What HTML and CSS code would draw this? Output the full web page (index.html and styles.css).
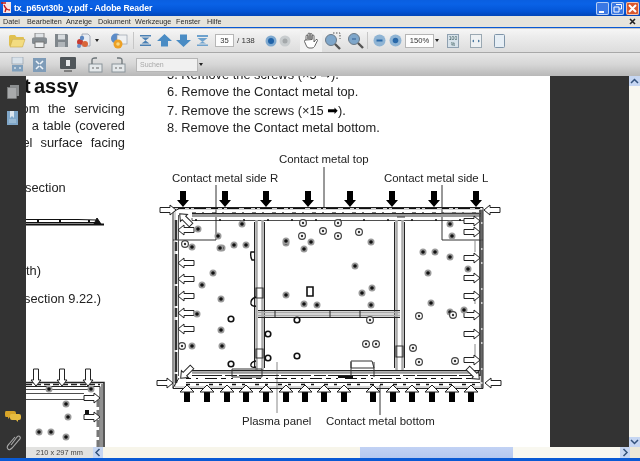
FILE: index.html
```html
<!DOCTYPE html>
<html lang="de">
<head>
<meta charset="utf-8">
<title>tx_p65vt30b_y.pdf - Adobe Reader</title>
<link rel="stylesheet" href="styles.css">
</head>
<body>
<div class="window">
  <header class="titlebar">
    <svg class="app-icon" width="11" height="12" viewBox="0 0 11 12"><rect x="2" y="0" width="8" height="11" fill="#f6e6e6"/><path d="M3 3C5 8 7 8 9 8M5 7L4 10M0 1H5" stroke="#c01818" stroke-width="1.4" fill="none"/></svg>
    <span class="title-text">tx_p65vt30b_y.pdf - Adobe Reader</span>
    <div class="win-buttons">
      <span class="win-btn"><svg width="13" height="13" viewBox="0 0 13 13"><rect x="3" y="9" width="5" height="2" fill="#fff"/></svg></span>
      <span class="win-btn"><svg width="13" height="13" viewBox="0 0 13 13"><path d="M5 2.500H10.500V7H8M3 5H8V10H3Z" fill="none" stroke="#fff"/></svg></span>
      <span class="win-btn win-close"><svg width="13" height="13" viewBox="0 0 13 13"><path d="M3 3L10 10M10 3L3 10" stroke="#fff" stroke-width="2"/></svg></span>
    </div>
  </header>
  <nav class="menubar">
    <span class="m-datei">Datei</span><span class="m-bearb">Bearbeiten</span><span class="m-anz">Anzeige</span><span class="m-dok">Dokument</span><span class="m-werk">Werkzeuge</span><span class="m-fen">Fenster</span><span class="m-hilfe">Hilfe</span>
    <svg class="doc-close" width="7" height="7" viewBox="0 0 7 7"><path d="M1 1L6 6M6 1L1 6" stroke="#222" stroke-width="1.600"/></svg>
  </nav>
  <div class="toolbar tb-one">
    <span class="btn w22"><svg width="18" height="14" viewBox="0 0 18 14"><path d="M1 2.500Q1 1 2.500 1H7L8.500 3H15Q16 3 16 4V5H5L2.500 12H2Q1 12 1 11Z" fill="#e0c050"/><path d="M4.500 5.500H17L14.500 13H2Z" fill="#f3dc80" stroke="#c9a63c" stroke-width=".6"/></svg></span>
    <span class="btn w22"><svg width="17" height="15" viewBox="0 0 17 15"><rect x="4" y="0" width="9" height="5" fill="#dfe3e6" stroke="#888"/><rect x="1" y="4.500" width="15" height="6.500" rx="1.500" fill="#858c91"/><rect x="4" y="9" width="9" height="5.500" fill="#eef0f1" stroke="#777"/></svg></span>
    <span class="btn w22"><svg width="15" height="15" viewBox="0 0 15 15"><path d="M1 1H13L14 2V14H1Z" fill="#7f868b"/><rect x="4" y="1.500" width="7" height="5" fill="#d8dcdf"/><rect x="4" y="9" width="7" height="5" fill="#b0b5b9"/></svg></span>
    <span class="btn w22"><svg width="17" height="16" viewBox="0 0 17 16"><path d="M7 1H13L15 3V13H7Z" fill="#e8ecf2" stroke="#8a94a4" stroke-width=".7"/><circle cx="5" cy="9" r="3" fill="#c83a30"/><circle cx="10" cy="11" r="3" fill="#d9663a"/><circle cx="7" cy="5" r="2.200" fill="#5c86c0"/><circle cx="4" cy="13" r="2" fill="#6a90c8"/></svg></span>
    <span class="caret"></span>
    <span class="sp8"></span>
    <span class="btn w22"><svg width="18" height="16" viewBox="0 0 18 16"><circle cx="6" cy="5.500" r="5" fill="#5c8cc8"/><rect x="7" y="2" width="10" height="9" fill="#eef0f2" stroke="#8a94a0" stroke-width=".6"/><circle cx="8" cy="11" r="4.500" fill="#eda024"/><circle cx="8" cy="11" r="1.800" fill="#f8d880"/></svg></span>
    <span class="sep s-a"></span>
    <span class="btn w19"><svg width="13" height="13" viewBox="0 0 13 13"><path d="M1 1H12V2.500H1ZM1 10.500H12V12H1ZM2.500 3.500H10.500L6.500 6.500ZM2.500 9.500H10.500L6.500 6.500Z" fill="#4a80b4"/></svg></span>
    <span class="btn w19"><svg width="15" height="13" viewBox="0 0 15 13"><path d="M7.500 0L15 7H11V12.500H4V7H0Z" fill="#4a8cc4"/></svg></span>
    <span class="btn w19"><svg width="15" height="13" viewBox="0 0 15 13"><path d="M7.500 13L15 6H11V.5H4V6H0Z" fill="#4a8cc4"/></svg></span>
    <span class="btn w19"><svg width="13" height="13" viewBox="0 0 13 13"><path d="M1 1H12V3H1ZM1.500 4L11.500 4L6.500 8ZM1 10.500H12V12H1ZM3 9.500H10L6.500 7.500Z" fill="#6ea2ce"/></svg></span>
    <span class="field page-field">35</span>
    <span class="page-count">/ 138</span>
    <span class="btn w14 gap9"><svg width="12" height="12" viewBox="0 0 12 12"><circle cx="6" cy="6" r="5.500" fill="#7fa9cf"/><circle cx="6" cy="6" r="3" fill="#1f62a8"/></svg></span>
    <span class="btn w14"><svg width="12" height="12" viewBox="0 0 12 12"><circle cx="6" cy="6" r="5.500" fill="#c8ccce"/><circle cx="6" cy="6" r="2.500" fill="#a4a8aa"/></svg></span>
    <span class="btn w22 hand gap8"><svg width="16" height="17" viewBox="0 0 16 17"><path d="M3 8V4.500Q3 3 4 3T5 4.500V7M5 7V2.500Q5 1 6 1T7 2.500V7M7 7V2.500Q7 1.500 8 1.500T9 2.500V7.500M9 7.500V4Q9 3 10 3T11 4V10L13 7.500Q14.500 7 14.500 8.500L11.500 14.500Q10.500 16 9 16H6Q4 16 3 13L1.500 9.500Q1.500 7.500 3 8Z" fill="#fff" stroke="#555" stroke-width=".9"/></svg></span>
    <span class="btn w22"><svg width="19" height="18" viewBox="0 0 19 18"><path d="M9 1H16V7" fill="none" stroke="#555" stroke-dasharray="1.500 1.500"/><circle cx="7" cy="8" r="5.500" fill="#7ea6ca" stroke="#6b7a88"/><path d="M11 12L16 17" stroke="#555" stroke-width="2.400"/></svg></span>
    <span class="btn w22 gap1"><svg width="19" height="18" viewBox="0 0 19 18"><circle cx="7" cy="7" r="5.500" fill="#7ea6ca" stroke="#6b7a88"/><path d="M11 11L16 16" stroke="#555" stroke-width="2.400"/><path d="M5 7H9" stroke="#2c5c94"/></svg></span>
    <span class="sep s-b"></span>
    <span class="btn w16"><svg width="13" height="13" viewBox="0 0 13 13"><circle cx="6.500" cy="6.500" r="6" fill="#8fb4d4"/><path d="M3.500 6.500H9.500" stroke="#2868a8" stroke-width="2"/></svg></span>
    <span class="btn w16"><svg width="13" height="13" viewBox="0 0 13 13"><circle cx="6.500" cy="6.500" r="6" fill="#8fb4d4"/><circle cx="6.500" cy="6.500" r="2.800" fill="#2868a8"/></svg></span>
    <span class="field zoom-field">150%</span>
    <span class="caret"></span>
    <span class="btn w22 gap2"><svg width="12" height="14" viewBox="0 0 12 14"><rect x=".5" y=".5" width="11" height="13" fill="#d7e2ea" stroke="#8ea0b0"/><text class="tiny" x="6" y="6">100</text><text class="tiny" x="6" y="12">%</text></svg></span>
    <span class="btn w22 gap1"><svg width="12" height="14" viewBox="0 0 12 14"><rect x=".5" y=".5" width="11" height="13" fill="#eef1f3" stroke="#9aa8b2"/><path d="M2 7L4 5.500V8.500ZM10 7L8 5.500V8.500Z" fill="#4a78a0"/></svg></span>
    <span class="btn w22 gap1"><svg width="11" height="14" viewBox="0 0 11 14"><rect x=".5" y=".5" width="10" height="13" rx="1" fill="#e6eef5" stroke="#7e94a8"/></svg></span>
  </div>
  <div class="toolbar tb-two">
    <span class="btn w22"><svg width="13" height="15" viewBox="0 0 13 15"><rect x="1" y="0" width="11" height="7" fill="#d9e2ea" stroke="#8a98a6" stroke-width=".6"/><rect x="1" y="8" width="11" height="6.500" fill="#7f9fbc"/><path d="M3 11H5M8 11H10" stroke="#fff"/></svg></span>
    <span class="btn w22"><svg width="13" height="14" viewBox="0 0 13 14"><rect x="0" y="0" width="13" height="14" fill="#7f9cb8"/><path d="M3 3L6 6M10 3L7 6M3 11L6 8M10 11L7 8" stroke="#eef3f8" stroke-width="1.600"/></svg></span>
    <span class="btn w22 gap7"><svg width="16" height="15" viewBox="0 0 16 15"><rect x="0" y="0" width="16" height="12" rx="1" fill="#50565a"/><rect x="6" y="3" width="4" height="6" fill="#e8eaec"/><path d="M4 14H12" stroke="#666" stroke-width="1.500"/></svg></span>
    <span class="btn w22 gap6"><svg width="16" height="16" viewBox="0 0 16 16"><rect x="1" y="7" width="13" height="8" fill="#e4e8ea" stroke="#8a949a"/><path d="M4 7V3Q4 1 7 1H9" fill="none" stroke="#6c7478" stroke-width="1.300"/><path d="M4 11H6M8 11H11" stroke="#666"/></svg></span>
    <span class="btn w22"><svg width="16" height="16" viewBox="0 0 16 16"><rect x="2" y="7" width="13" height="8" fill="#e4e8ea" stroke="#8a949a"/><path d="M12 7V3Q12 1 9 1H7" fill="none" stroke="#6c7478" stroke-width="1.300"/><path d="M5 11H7M9 11H12" stroke="#666"/></svg></span>
    <span class="field search-field">Suchen</span>
    <span class="caret"></span>
  </div>
  <div class="workspace">
    <aside class="sidebar">
      <div class="side-top">
        <svg width="12" height="14" viewBox="0 0 12 14"><rect x="3" y="0" width="9" height="11" fill="#8c8f90"/><rect x=".5" y="2.500" width="9" height="11" fill="#a8aaab" stroke="#808283" stroke-width=".6"/></svg>
        <svg width="12" height="15" viewBox="0 0 12 15"><rect x="0" y="0" width="11" height="14" fill="#7fa6c8"/><path d="M3 0H7V7L5 5L3 7Z" fill="#dbe5ee"/><path d="M2 9H9M2 11H9" stroke="#b5cde0"/></svg>
      </div>
      <div class="side-bottom">
        <svg width="16" height="12" viewBox="0 0 16 12"><path d="M1 1H9Q11 1 11 3V5Q11 7 9 7H5L3 9V7H1Q0 7 0 5V3Q0 1 1 1Z" fill="#d8a428"/><path d="M6 4H14Q16 4 16 6V8Q16 10 14 10H13V12L11 10H7Q5 10 5 8V6Q5 4 6 4Z" fill="#e8bc40"/></svg>
        <svg width="15" height="17" viewBox="0 0 15 17"><path d="M5 11L11 3Q13 1 14 3Q15 4 13 6L6 14Q3 17 2 15Q0 13 3 10L9 3" fill="none" stroke="#a9a9a9" stroke-width="1.100"/></svg>
      </div>
    </aside>
    <div class="document-column">
      <div class="document-row">
        <svg class="page" viewBox="26 76 524 371" width="524" height="371">
          <defs>
            <path id="ar" d="M0 -2.500H10V-5L16 0L10 5V2.500H0Z" fill="#fff" stroke="#222" stroke-width="1"/>
            <path id="al" d="M16 -2.500H6V-5L0 0L6 5V2.500H16Z" fill="#fff" stroke="#222" stroke-width="1"/>
            <path id="ad" d="M-3 0H3V9H6L0 16L-6 9H-3Z" fill="#000"/>
            <g id="au"><path d="M-3 7H3V17H-3Z" fill="#000"/><path d="M0 0L7 7H-7Z" fill="#fff" stroke="#222"/></g>
            <path id="aw" d="M-2.500 -17V-6H-5L0 0L5 -6H2.500V-17Z" fill="#fff" stroke="#222"/>
            <g id="sa"><circle r="3.500" fill="#9a9a9a"/><circle r="1.800" fill="#111"/></g>
            <g id="sb"><circle r="3.400" fill="#fff" stroke="#444" stroke-width="1.200"/><circle r="1.200" fill="#333"/></g>
            <g id="sc"><circle r="2.800" fill="none" stroke="#111" stroke-width="1.600"/></g>
          </defs>

          <text class="pdf-h" x="34" y="93">assy</text>
          <text class="pdf-h" x="24" y="93">t</text>
          <text class="pdf-j" x="125" y="113" text-anchor="end" word-spacing="5">om the servicing</text>
          <text class="pdf-j" x="125" y="130" text-anchor="end" word-spacing=".6">a table (covered</text>
          <text class="pdf-j" x="125" y="147" text-anchor="end" word-spacing="4.500">el surface facing</text>
          <text class="pdf-j" x="25" y="192">section</text>
          <text class="pdf-j" x="41" y="275" text-anchor="end">depth)</text>
          <text class="pdf-j" x="24" y="303">section 9.22.)</text>

          <g stroke="#111" fill="none">
            <path d="M26 219.500H78L96 220" stroke-width="1"/>
            <path d="M26 222.500H100" stroke-width="1"/>
            <path d="M26 224.500H104" stroke-width="2"/>
            <path d="M38 220L38 222M60 220L60 222M89 220V222" stroke-width="2"/>
            <path d="M94 224L97 218L101 224Z" fill="#111"/>
          </g>

          <text class="pdf-t" x="167" y="79">5. Remove the screws (×5 <tspan class="arrow-glyph">➡</tspan>).</text>
          <text class="pdf-t" x="167" y="96">6. Remove the Contact metal top.</text>
          <text class="pdf-t" x="167" y="115">7. Remove the screws (×15 <tspan class="arrow-glyph">➡</tspan>).</text>
          <text class="pdf-t" x="167" y="132">8. Remove the Contact metal bottom.</text>

          <text class="pdf-l" x="279" y="163">Contact metal top</text>
          <text class="pdf-l" x="172" y="182">Contact metal side R</text>
          <text class="pdf-l" x="384" y="182">Contact metal side L</text>
          <text class="pdf-l" x="242" y="425">Plasma panel</text>
          <text class="pdf-l" x="326" y="425">Contact metal bottom</text>

          <!-- small diagram at lower left of the page -->
          <g fill="none" stroke="#222">
            <path d="M26 382.500H104V447" stroke-width="1.500"/>
            <path d="M26 386.500H100V447M102 384V447" stroke-width="1"/>
            <path d="M26 389.500H92M26 393.500H84M26 399.500H84" stroke-width=".8"/>
            <path d="M26 384.500H100" stroke-width="1.500" stroke-dasharray="6 3"/>
            <path d="M98 400V447" stroke="#777" stroke-width="3" stroke-dasharray="7 3"/>
          </g>
          <use href="#aw" x="36" y="386"/><use href="#aw" x="62" y="386"/><use href="#aw" x="88" y="386"/>
          <use href="#ar" x="84" y="398"/><use href="#ar" x="84" y="417"/>
          <use href="#sa" x="91" y="389"/><use href="#sa" x="49" y="389"/>
          <use href="#sa" x="66" y="404"/><use href="#sa" x="68" y="417"/><use href="#sa" x="39" y="432"/><use href="#sa" x="51" y="432"/><use href="#sa" x="66" y="437"/>
          <rect x="85" y="410" width="4" height="4" fill="#111"/>

          <!-- main diagram: leaders -->
          <g fill="none" stroke="#333">
            <path d="M324 167V207"/>
            <path d="M216 185V240H173"/>
            <path d="M442 185V240H483"/>
            <path d="M380 385V415"/>
          </g>
          <path d="M277 362V413" stroke="#888" fill="none"/>

          <!-- frame -->
          <g fill="none">
            <path d="M173 207.500H483V388.500H173Z" stroke="#222" stroke-width="1"/>
            <path d="M175 209H481V387H175Z" stroke="#aaa" stroke-width="1"/>
            <path d="M178 208.500H480" stroke="#111" stroke-width="1" stroke-dasharray="7 4 2 3 12 5"/>
            <path d="M192 213.500H481" stroke="#222" stroke-width="1"/>
            <path d="M192 212.500H481" stroke="#222" stroke-width=".6" stroke-dasharray="4 6 2 8"/>
            <path d="M192 215.500H481" stroke="#999" stroke-width="3"/>
            <path d="M192 218V220.500H480" stroke="#222" stroke-width=".8"/>
            <path d="M195 220H480" stroke="#111" stroke-width="1.500" stroke-dasharray="2 22"/>
            <path d="M176 220V386" stroke="#333" stroke-width="2.500" stroke-dasharray="20 2 9 3 30 2"/>
            <path d="M178.500 215V376" stroke="#555" stroke-width="1"/>
            <path d="M480 210V376" stroke="#222" stroke-width="1.500"/>
            <path d="M482 210V388" stroke="#444" stroke-width="1.500" stroke-dasharray="12 2 24 2"/>
            <path d="M475 240V372" stroke="#888" stroke-width="1" stroke-dasharray="12 40"/>
            <path d="M192 370.500H480" stroke="#222" stroke-width="1"/>
            <path d="M192 372.500H480" stroke="#999" stroke-width="2.500"/>
            <path d="M192 375.500H480" stroke="#222" stroke-width="1" stroke-dasharray="30 3 12 2 40 2"/>
            <path d="M186 378.500H480" stroke="#111" stroke-width="1" stroke-dasharray="5 5 2 7 12 4"/>
            <path d="M186 382.500H480" stroke="#333" stroke-width="1"/>
            <path d="M186 384.500H480" stroke="#111" stroke-width="1.500" stroke-dasharray="4 6 3 10"/>
            <path d="M256.500 220V370M262.500 220V370" stroke="#aaa" stroke-width="2.500"/>
            <path d="M254.500 222V368M264.500 222V368" stroke="#222" stroke-width="1"/>
            <path d="M396.500 220V370M402.500 220V370" stroke="#aaa" stroke-width="2.500"/>
            <path d="M394.500 222V368M404.500 222V368" stroke="#222" stroke-width="1"/>
            <path d="M258 312.500H400M258 315.500H400" stroke="#aaa" stroke-width="1.800"/>
            <path d="M258 310.500H400M258 317.500H400" stroke="#222" stroke-width="1"/>
            <path d="M275 310V317M330 310V317M360 310V317" stroke="#222"/>
            <path d="M232 369H262V377H232ZM351 368V361H372L374 368ZM351 362V377M374 362V377" stroke="#333" stroke-width="1"/>
            <path d="M338 377H353" stroke="#111" stroke-width="2"/>
            <path d="M256 288H263V298H256ZM256 349H263V358H256ZM396 346H403V357H396ZM397 217H405" stroke="#333" stroke-width="1.200"/>
            <path d="M441 213H480V240" stroke="#666" stroke-width=".8"/>
            <path d="M255 252H251Q250 256 252 260H255" stroke="#111" stroke-width="1.400"/>
            <path d="M256 297Q250 299 251 304Q252 307 256 306" stroke="#111" stroke-width="1.400"/>
            <path d="M256 361Q250 362 251 366Q252 368 256 367" stroke="#111" stroke-width="1.400"/>
            <path d="M307 287H313V296H307Z" stroke="#111" stroke-width="1.600"/>
            <path d="M179 378L173 388M173 212L180 208" stroke="#222"/>
          </g>

          <!-- arrows -->
          <use href="#ad" x="183" y="191"/><use href="#ad" x="225" y="191"/><use href="#ad" x="266" y="191"/><use href="#ad" x="308" y="191"/><use href="#ad" x="350" y="191"/><use href="#ad" x="392" y="191"/><use href="#ad" x="434" y="191"/><use href="#ad" x="476" y="191"/>
          <use href="#au" x="187" y="385"/><use href="#au" x="207" y="385"/><use href="#au" x="227" y="385"/><use href="#au" x="246" y="385"/><use href="#au" x="266" y="385"/><use href="#au" x="286" y="385"/><use href="#au" x="305" y="385"/><use href="#au" x="324" y="385"/><use href="#au" x="344" y="385"/><use href="#au" x="373" y="385"/><use href="#au" x="393" y="385"/><use href="#au" x="412" y="385"/><use href="#au" x="432" y="385"/><use href="#au" x="452" y="385"/><use href="#au" x="471" y="385"/>
          <use href="#al" x="178" y="230"/><use href="#al" x="178" y="263"/><use href="#al" x="178" y="279"/><use href="#al" x="178" y="296"/><use href="#al" x="178" y="313"/><use href="#al" x="178" y="329"/>
          <use href="#ar" x="464" y="221"/><use href="#ar" x="464" y="232"/><use href="#ar" x="464" y="258"/><use href="#ar" x="464" y="278"/><use href="#ar" x="464" y="296"/><use href="#ar" x="464" y="315"/><use href="#ar" x="464" y="334"/><use href="#ar" x="464" y="360"/>
          <use href="#ar" x="160" y="210"/><use href="#al" x="484" y="210"/><use href="#ar" x="157" y="383"/><use href="#al" x="485" y="383"/>
          <use href="#ar" transform="translate(191 225) rotate(-135)"/>
          <use href="#ar" transform="translate(192 367) rotate(135)"/>
          <use href="#ar" transform="translate(468 368) rotate(45)"/>

          <!-- screws -->
          <use href="#sa" x="198" y="229"/><use href="#sa" x="218" y="236"/><use href="#sa" x="242" y="224"/><use href="#sb" x="185" y="244"/><use href="#sa" x="192" y="247"/><use href="#sa" x="222" y="248"/><use href="#sa" x="220" y="248"/><use href="#sa" x="234" y="245"/><use href="#sa" x="246" y="245"/><use href="#sa" x="213" y="273"/><use href="#sa" x="202" y="285"/><use href="#sa" x="221" y="299"/><use href="#sa" x="286" y="295"/>
          <use href="#sb" x="303" y="223"/><use href="#sb" x="302" y="236"/><use href="#sb" x="323" y="231"/><use href="#sb" x="338" y="223"/><use href="#sb" x="338" y="236"/><use href="#sa" x="286" y="243"/><use href="#sa" x="286" y="241"/><use href="#sa" x="311" y="242"/><use href="#sa" x="304" y="249"/>
          <use href="#sb" x="359" y="232"/><use href="#sa" x="371" y="242"/><use href="#sa" x="355" y="266"/><use href="#sa" x="372" y="288"/><use href="#sa" x="362" y="293"/><use href="#sa" x="423" y="252"/><use href="#sa" x="435" y="252"/><use href="#sa" x="450" y="257"/><use href="#sa" x="428" y="273"/><use href="#sa" x="450" y="224"/><use href="#sa" x="452" y="236"/><use href="#sa" x="468" y="269"/>
          <use href="#sa" x="197" y="314"/><use href="#sc" x="231" y="319"/><use href="#sa" x="221" y="330"/><use href="#sb" x="182" y="346"/><use href="#sa" x="192" y="346"/><use href="#sa" x="222" y="346"/><use href="#sc" x="231" y="364"/><use href="#sc" x="268" y="334"/><use href="#sc" x="268" y="358"/><use href="#sc" x="297" y="320"/><use href="#sc" x="297" y="356"/><use href="#sa" x="304" y="304"/><use href="#sa" x="317" y="305"/>
          <use href="#sa" x="431" y="303"/><use href="#sa" x="371" y="305"/><use href="#sb" x="370" y="320"/><use href="#sb" x="419" y="316"/><use href="#sa" x="450" y="312"/><use href="#sb" x="453" y="315"/><use href="#sa" x="464" y="310"/><use href="#sb" x="366" y="344"/><use href="#sb" x="376" y="344"/><use href="#sb" x="413" y="348"/><use href="#sb" x="419" y="362"/><use href="#sb" x="455" y="361"/>
        </svg>
        <div class="gutter"></div>
        <div class="vscroll">
          <span class="sb-btn"><svg width="9" height="8" viewBox="0 0 9 8"><path d="M1 6L4.500 2.500L8 6" fill="none" stroke="#33527c" stroke-width="1.500"/></svg></span>
          <span class="sb-btn"><svg width="9" height="8" viewBox="0 0 9 8"><path d="M1 2L4.500 5.500L8 2" fill="none" stroke="#33527c" stroke-width="1.500"/></svg></span>
        </div>
      </div>
      <div class="statusbar">
        <span class="page-size">210 x 297 mm</span>
        <span class="sb-btn hbtn"><svg width="8" height="9" viewBox="0 0 8 9"><path d="M5.500 1L2 4.500L5.500 8" fill="none" stroke="#33527c" stroke-width="1.500"/></svg></span>
        <span class="htrack"></span>
        <span class="hthumb"></span>
        <span class="htrack-end"></span>
        <span class="sb-btn hbtn"><svg width="8" height="9" viewBox="0 0 8 9"><path d="M2.500 1L6 4.500L2.500 8" fill="none" stroke="#33527c" stroke-width="1.500"/></svg></span>
        <span class="corner"></span>
      </div>
    </div>
  </div>
  <div class="frame-bottom"></div>
</div>
</body>
</html>
```
FILE: styles.css
```css
html, body { margin: 0; padding: 0; background: #0a5ad4; overflow: hidden; }
.window { width: 640px; height: 461px; display: flex; flex-direction: column; overflow: hidden; font-family: "Liberation Sans", Arial, sans-serif; }

.titlebar { height: 16px; flex: none; display: flex; align-items: center; padding-left: 1px; box-sizing: border-box; background: linear-gradient(#0a5fe0 0, #0a62e6 25%, #0355d6 70%, #0246b8 100%); filter: blur(.3px); }
.app-icon { margin-right: 2px; flex: none; }
.title-text { color: #fff; font-size: 8.700px; font-weight: bold; letter-spacing: -.1px; white-space: nowrap; }
.win-buttons { margin-left: auto; display: flex; gap: 2px; padding-right: 1px; }
.win-btn { width: 13px; height: 13px; display: block; border-radius: 2px; background: #3a78e4; box-shadow: inset 0 0 0 1px #b8cff4; }
.win-btn svg { display: block; }
.win-close { background: #d9582e; box-shadow: inset 0 0 0 1px #f2c4b0; }

.menubar { height: 11px; flex: none; display: flex; align-items: center; font-size: 7.200px; color: #2a2a2a; background: #e6e4dc; filter: blur(.25px); }
.m-datei { margin-left: 3px; width: 24px; }
.m-bearb { width: 39px; }
.m-anz { width: 32px; }
.m-dok { width: 37px; }
.m-werk { width: 41px; }
.m-fen { width: 31px; }
.m-hilfe { width: 20px; }
.doc-close { margin-left: auto; margin-right: 4px; }

.toolbar { flex: none; display: flex; align-items: center; box-sizing: border-box; padding-left: 6px; filter: blur(.35px); }
.tb-one { height: 24px; margin-top: 1px; background: linear-gradient(#f6f6f6, #ededed 30%, #dedede 95%); border-top: 1px solid #c8c8c8; }
.tb-two { height: 24px; background: linear-gradient(#e6e6e6, #d6d6d6 50%, #b8b8b8); border-top: 1px solid #a8a8a8; }
.btn { flex: none; height: 21px; display: flex; align-items: center; justify-content: center; }
.w22 { width: 22px; }
.w19 { width: 19px; }
.w16 { width: 16px; }
.w14 { width: 14px; }
.gap1 { margin-left: 1px; }
.gap2 { margin-left: 2px; }
.gap6 { margin-left: 6px; }
.gap7 { margin-left: 7px; }
.gap8 { margin-left: 8px; }
.gap9 { margin-left: 9px; }
.sp8 { width: 8px; flex: none; }
.caret { flex: none; width: 6px; height: 3px; display: flex; justify-content: center; }
.caret::before { content: ""; border-left: 2.500px solid transparent; border-right: 2.500px solid transparent; border-top: 3px solid #222; }
.sep { flex: none; width: 1px; height: 17px; background: #c6c6c6; }
.s-a { margin: 0 2px 0 3px; }
.s-b { margin: 0 3px 0 0; }
.field { flex: none; box-sizing: border-box; background: #fdfdfd; border: 1px solid #b6b6b6; font-size: 7.600px; color: #333; display: flex; align-items: center; }
.page-field { width: 19px; height: 13px; margin-left: 3px; justify-content: center; }
.page-count { flex: none; width: 18px; margin-left: 3px; font-size: 8px; color: #333; white-space: nowrap; }
.hand { background: #f1f1f1; height: 22px; }
.zoom-field { width: 29px; height: 14px; margin-left: 2px; justify-content: center; }
.search-field { width: 62px; height: 14px; margin-left: 7px; padding-left: 3px; font-size: 7px; color: #a8a8a8; background: #f0f0f0; }
.tiny { font: 5px "Liberation Sans", sans-serif; text-anchor: middle; fill: #355; }

.workspace { flex: 1; min-height: 0; display: flex; }
.sidebar { width: 26px; flex: none; background: #333; display: flex; flex-direction: column; justify-content: space-between; align-items: center; padding: 9px 0 7px; box-sizing: border-box; filter: blur(.3px); }
.side-top { display: flex; flex-direction: column; gap: 12px; align-items: center; }
.side-bottom { display: flex; flex-direction: column; gap: 12px; align-items: center; }
.document-column { flex: 1; min-width: 0; display: flex; flex-direction: column; }
.document-row { flex: 1; min-height: 0; display: flex; }
.page { flex: none; display: block; background: #fff; box-sizing: border-box; filter: blur(.4px); }
.gutter { flex: 1; background: #333; }
.vscroll { width: 11px; flex: none; background: #f8f7f0; display: flex; flex-direction: column; justify-content: space-between; }
.sb-btn { width: 11px; height: 10px; display: flex; align-items: center; justify-content: center; background: #c6d6f2; flex: none; }

.pdf-h { font: bold 20px "Liberation Sans", Arial, sans-serif; fill: #111; }
.pdf-j { font: 12.850px "Liberation Sans", Arial, sans-serif; fill: #222; }
.pdf-t { font: 12.850px "Liberation Sans", Arial, sans-serif; fill: #222; }
.pdf-l { font: 11.450px "Liberation Sans", Arial, sans-serif; fill: #222; }
.arrow-glyph { font-family: "DejaVu Sans", sans-serif; fill: #000; }

.statusbar { height: 11px; flex: none; display: flex; align-items: center; background: #f7f5ea; filter: blur(.25px); }
.page-size { width: 67px; flex: none; height: 100%; background: #e2e2e0; font-size: 7.400px; color: #444; display: flex; align-items: center; justify-content: center; }
.hbtn { width: 10px; height: 11px; }
.htrack { width: 257px; flex: none; height: 100%; background: #f7f5ea; }
.hthumb { width: 153px; flex: none; height: 100%; background: linear-gradient(#c2d2f4, #b4c8f0); }
.htrack-end { width: 107px; flex: none; height: 100%; background: #f9f8f0; }
.corner { flex: 1; height: 100%; background: #ece9d8; }

.frame-bottom { height: 3px; flex: none; background: #0a5ad4; }
```
